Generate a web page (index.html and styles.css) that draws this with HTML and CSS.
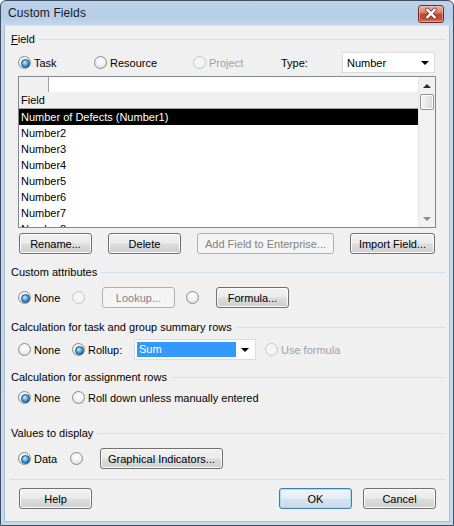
FILE: index.html
```html
<!DOCTYPE html>
<html>
<head>
<meta charset="utf-8">
<link rel="stylesheet" href="styles.css">
</head>
<body>
<div class="window">
  <div class="titlebar">
    <span class="title">Custom Fields</span>
    <div class="close">
      <svg width="25" height="17" viewBox="0 0 25 17">
        <path d="M8.5 4.5 L16.5 12.5 M16.5 4.5 L8.5 12.5" stroke="#6b3a33" stroke-width="4.2" stroke-linecap="round" fill="none"/>
        <path d="M8.5 4.5 L16.5 12.5 M16.5 4.5 L8.5 12.5" stroke="#ffffff" stroke-width="2.4" stroke-linecap="round" fill="none"/>
      </svg>
    </div>
  </div>
  <div class="content">
    <div class="glabel"><span><u>F</u>ield</span></div>
    <div class="row field-row">
      <label class="opt w-task"><span class="radio on"></span>Task</label>
      <label class="opt w-res"><span class="radio"></span>Resource</label>
      <label class="opt w-proj disabled"><span class="radio dis"></span>Project</label>
      <span class="type-label">Type:</span>
      <div class="combo type-combo"><span>Number</span><span class="arrow"></span></div>
    </div>
    <div class="list">
      <div class="list-body">
        <div class="list-top"><span class="corner"></span></div>
        <div class="list-head">Field</div>
        <div class="item sel">Number of Defects (Number1)</div>
        <div class="item">Number2</div>
        <div class="item">Number3</div>
        <div class="item">Number4</div>
        <div class="item">Number5</div>
        <div class="item">Number6</div>
        <div class="item">Number7</div>
        <div class="item">Number8</div>
      </div>
      <div class="scroll">
        <div class="sbtn"><span class="up"></span></div>
        <div class="thumb"></div>
        <div class="strack"></div>
        <div class="sbtn"><span class="down"></span></div>
      </div>
    </div>
    <div class="row btn-row">
      <button class="btn">Rename...</button>
      <button class="btn">Delete</button>
      <button class="btn wide" disabled>Add Field to Enterprise...</button>
      <button class="btn import">Import Field...</button>
    </div>

    <div class="glabel g-attr"><span>Custom attributes</span></div>
    <div class="row attr-row">
      <label class="opt w-none"><span class="radio on"></span>None</label>
      <span class="radio dis"></span>
      <button class="btn lookup" disabled>Lookup...</button>
      <span class="radio r-formula"></span>
      <button class="btn formula">Formula...</button>
    </div>

    <div class="glabel g-calc"><span>Calculation for task and group summary rows</span></div>
    <div class="row calc-row">
      <label class="opt w-none"><span class="radio"></span>None</label>
      <label class="opt w-rollup"><span class="radio on"></span>Rollup:</label>
      <div class="combo sum-combo"><span class="selected">Sum</span><span class="arrow"></span></div>
      <label class="opt disabled use-formula"><span class="radio dis"></span>Use formula</label>
    </div>

    <div class="glabel g-assign"><span>Calculation for assignment rows</span></div>
    <div class="row assign-row">
      <label class="opt w-none"><span class="radio on"></span>None</label>
      <label class="opt"><span class="radio"></span>Roll down unless manually entered</label>
    </div>

    <div class="glabel g-values"><span>Values to display</span></div>
    <div class="row values-row">
      <label class="opt w-data"><span class="radio on"></span>Data</label>
      <span class="radio"></span>
      <button class="btn graphical">Graphical Indicators...</button>
    </div>

    <div class="separator"></div>
    <div class="row bottom-row">
      <button class="btn">Help</button>
      <div class="spacer"></div>
      <button class="btn default">OK</button>
      <button class="btn">Cancel</button>
    </div>
  </div>
</div>
</body>
</html>
```

FILE: styles.css
```css
* { box-sizing: border-box; }
html, body { margin: 0; padding: 0; }
body {
  font-family: "Liberation Sans", Arial, sans-serif;
  font-size: 11px;
  color: #000;
  background: #ffffff;
}
.window {
  width: 454px;
  height: 526px;
  border: 1px solid #3f4f61;
  border-radius: 6px 6px 0 0;
  background: linear-gradient(#bcd2ea 0px, #b5cde7 16px, #c3d7ed 24px, #c6daee 100%);
  display: flex;
  flex-direction: column;
  padding: 0 3px 3px;
}
.titlebar {
  height: 24px;
  flex: none;
  display: flex;
  align-items: center;
  justify-content: space-between;
  padding: 0 6px 0 4px;
}
.title {
  font-size: 12px;
  color: #1a1a1a;
  letter-spacing: 0.1px;
}
.close {
  width: 26px;
  height: 18px;
  border: 1px solid #6e2b22;
  border-radius: 3px;
  background: linear-gradient(#ebb3a8 0%, #d98371 40%, #c5462f 52%, #c44a31 78%, #dd7c63 100%);
  box-shadow: inset 0 0 0 1px rgba(255, 210, 200, 0.5);
  display: flex;
  align-items: center;
  justify-content: center;
  margin-top: 1px;
}
.close svg { display: block; }
.content {
  flex: 1;
  background: #f0f0f0;
  border: 1px solid #a9bed4;
  border-top-color: #d7e4f1;
  padding: 6px 3px 0 6px;
  display: flex;
  flex-direction: column;
}
.glabel {
  display: flex;
  align-items: center;
  height: 14px;
  flex: none;
}
.glabel::after {
  content: "";
  flex: 1;
  height: 1px;
  background: #d5dfe5;
  margin-left: 4px;
}
.row {
  display: flex;
  align-items: center;
  height: 21px;
  margin-left: 7px;
  flex: none;
}
.opt {
  display: flex;
  align-items: center;
  gap: 3px;
  white-space: nowrap;
}
.opt.disabled { color: #a0a0a0; }
.radio {
  width: 13px;
  height: 13px;
  border-radius: 50%;
  border: 1px solid #8b8c8c;
  background: radial-gradient(circle at 50% 35%, #ffffff 0%, #f3f3f3 45%, #d4d4d4 100%);
  position: relative;
  flex: none;
  display: inline-block;
}
.radio.on::after {
  content: "";
  position: absolute;
  left: 2px;
  top: 2px;
  width: 7px;
  height: 7px;
  border-radius: 50%;
  border: 1px solid #1b4d7c;
  background: radial-gradient(circle at 40% 35%, #cdeeff 0%, #4aa7ea 45%, #0d4f8f 100%);
}
.radio.dis {
  border-color: #c5c6c6;
  background: #f4f4f4;
}
.field-row { margin-top: 6px; }
.w-task { width: 76px; }
.w-res { width: 99px; }
.w-proj { width: 88px; }
.type-label { width: 61px; }
.combo {
  position: relative;
  height: 21px;
  background: #fff;
  border: 1px solid #dcdcdc;
  display: flex;
  align-items: center;
}
.type-combo {
  width: 93px;
  padding-left: 4px;
}
.arrow {
  position: absolute;
  right: 5px;
  top: 8px;
  width: 0;
  height: 0;
  border-left: 4px solid transparent;
  border-right: 4px solid transparent;
  border-top: 4px solid #000;
}
.list {
  margin-top: 3px;
  margin-left: 7px;
  width: 418px;
  height: 152px;
  border: 1px solid #828790;
  background: #fff;
  display: flex;
  flex: none;
}
.list-body {
  flex: 1;
  overflow: hidden;
}
.list-top {
  height: 15px;
  display: flex;
}
.corner {
  width: 30px;
  height: 15px;
  background: #f0f0f0;
  border-right: 1px solid #a0a0a0;
}
.list-head {
  height: 17px;
  line-height: 16px;
  background: #f0f0f0;
  border-bottom: 1px solid #a0a0a0;
  padding-left: 2px;
}
.item {
  height: 16px;
  line-height: 16px;
  padding-left: 2px;
  white-space: nowrap;
}
.item.sel {
  background: #000;
  color: #fff;
}
.scroll {
  width: 17px;
  background: #f1f1f1;
  border-left: 1px solid #e6e6e6;
  display: flex;
  flex-direction: column;
}
.sbtn {
  height: 17px;
  display: flex;
  align-items: center;
  justify-content: center;
}
.up {
  width: 0; height: 0;
  border-left: 4px solid transparent;
  border-right: 4px solid transparent;
  border-bottom: 4px solid #2e2e2e;
}
.down {
  width: 0; height: 0;
  border-left: 4px solid transparent;
  border-right: 4px solid transparent;
  border-top: 4px solid #8a8a8a;
}
.thumb {
  height: 16px;
  margin: 0 1px;
  border: 1px solid #959595;
  border-radius: 2px;
  background: linear-gradient(90deg, #f4f4f4 0%, #e8e8e8 50%, #d6d6d6 100%);
  box-shadow: inset 0 0 0 1px #fbfbfb;
}
.strack { flex: 1; }
.btn-row {
  margin-top: 5px;
  margin-left: 8px;
  gap: 16px;
}
.btn {
  font-family: "Liberation Sans", Arial, sans-serif;
  font-size: 11px;
  color: #000;
  width: 73px;
  height: 21px;
  padding: 0;
  border: 1px solid #707070;
  border-radius: 3px;
  background: linear-gradient(#f2f2f2 0%, #ebebeb 48%, #dddddd 52%, #cfcfcf 100%);
  box-shadow: inset 0 0 0 1px #fbfbfb;
  flex: none;
}
.btn:disabled {
  border-color: #adb2b5;
  background: #f4f4f4;
  color: #838383;
  box-shadow: none;
}
.btn.wide { width: 137px; }
.btn.import { width: 85px; }
.g-attr { margin-top: 11px; }
.attr-row { margin-top: 8px; }
.w-none { width: 54px; }
.lookup { margin-left: 17px; }
.r-formula { margin-left: 11px; }
.formula { margin-left: 17px; }
.g-calc { margin-top: 12px; }
.calc-row { margin-top: 5px; }
.w-rollup { width: 62px; }
.sum-combo {
  width: 122px;
  padding: 2px;
}
.sum-combo .selected {
  width: 99px;
  height: 15px;
  line-height: 15px;
  background: #3399ff;
  color: #fff;
  padding-left: 2px;
}
.sum-combo .arrow { right: 6px; top: 8px; }
.use-formula { margin-left: 9px; }
.g-assign { margin-top: 10px; }
.assign-row { margin-top: 3px; }
.g-values { margin-top: 18px; }
.values-row { margin-top: 8px; }
.w-data { width: 52px; }
.graphical { width: 123px; margin-left: 17px; }
.separator {
  margin-top: 10px;
  margin-left: -2px;
  height: 1px;
  background: #d5dfe5;
  flex: none;
}
.bottom-row {
  margin-top: 8px;
  margin-left: 8px;
  margin-right: 10px;
  gap: 11px;
}
.spacer { flex: 1; }
.btn.default {
  border-color: #3c7fb1;
  box-shadow: inset 0 0 0 1px #a8dbf6;
  background: linear-gradient(#eef5fa 0%, #e3eef6 48%, #d6e3ee 52%, #cbdbe9 100%);
}
```
